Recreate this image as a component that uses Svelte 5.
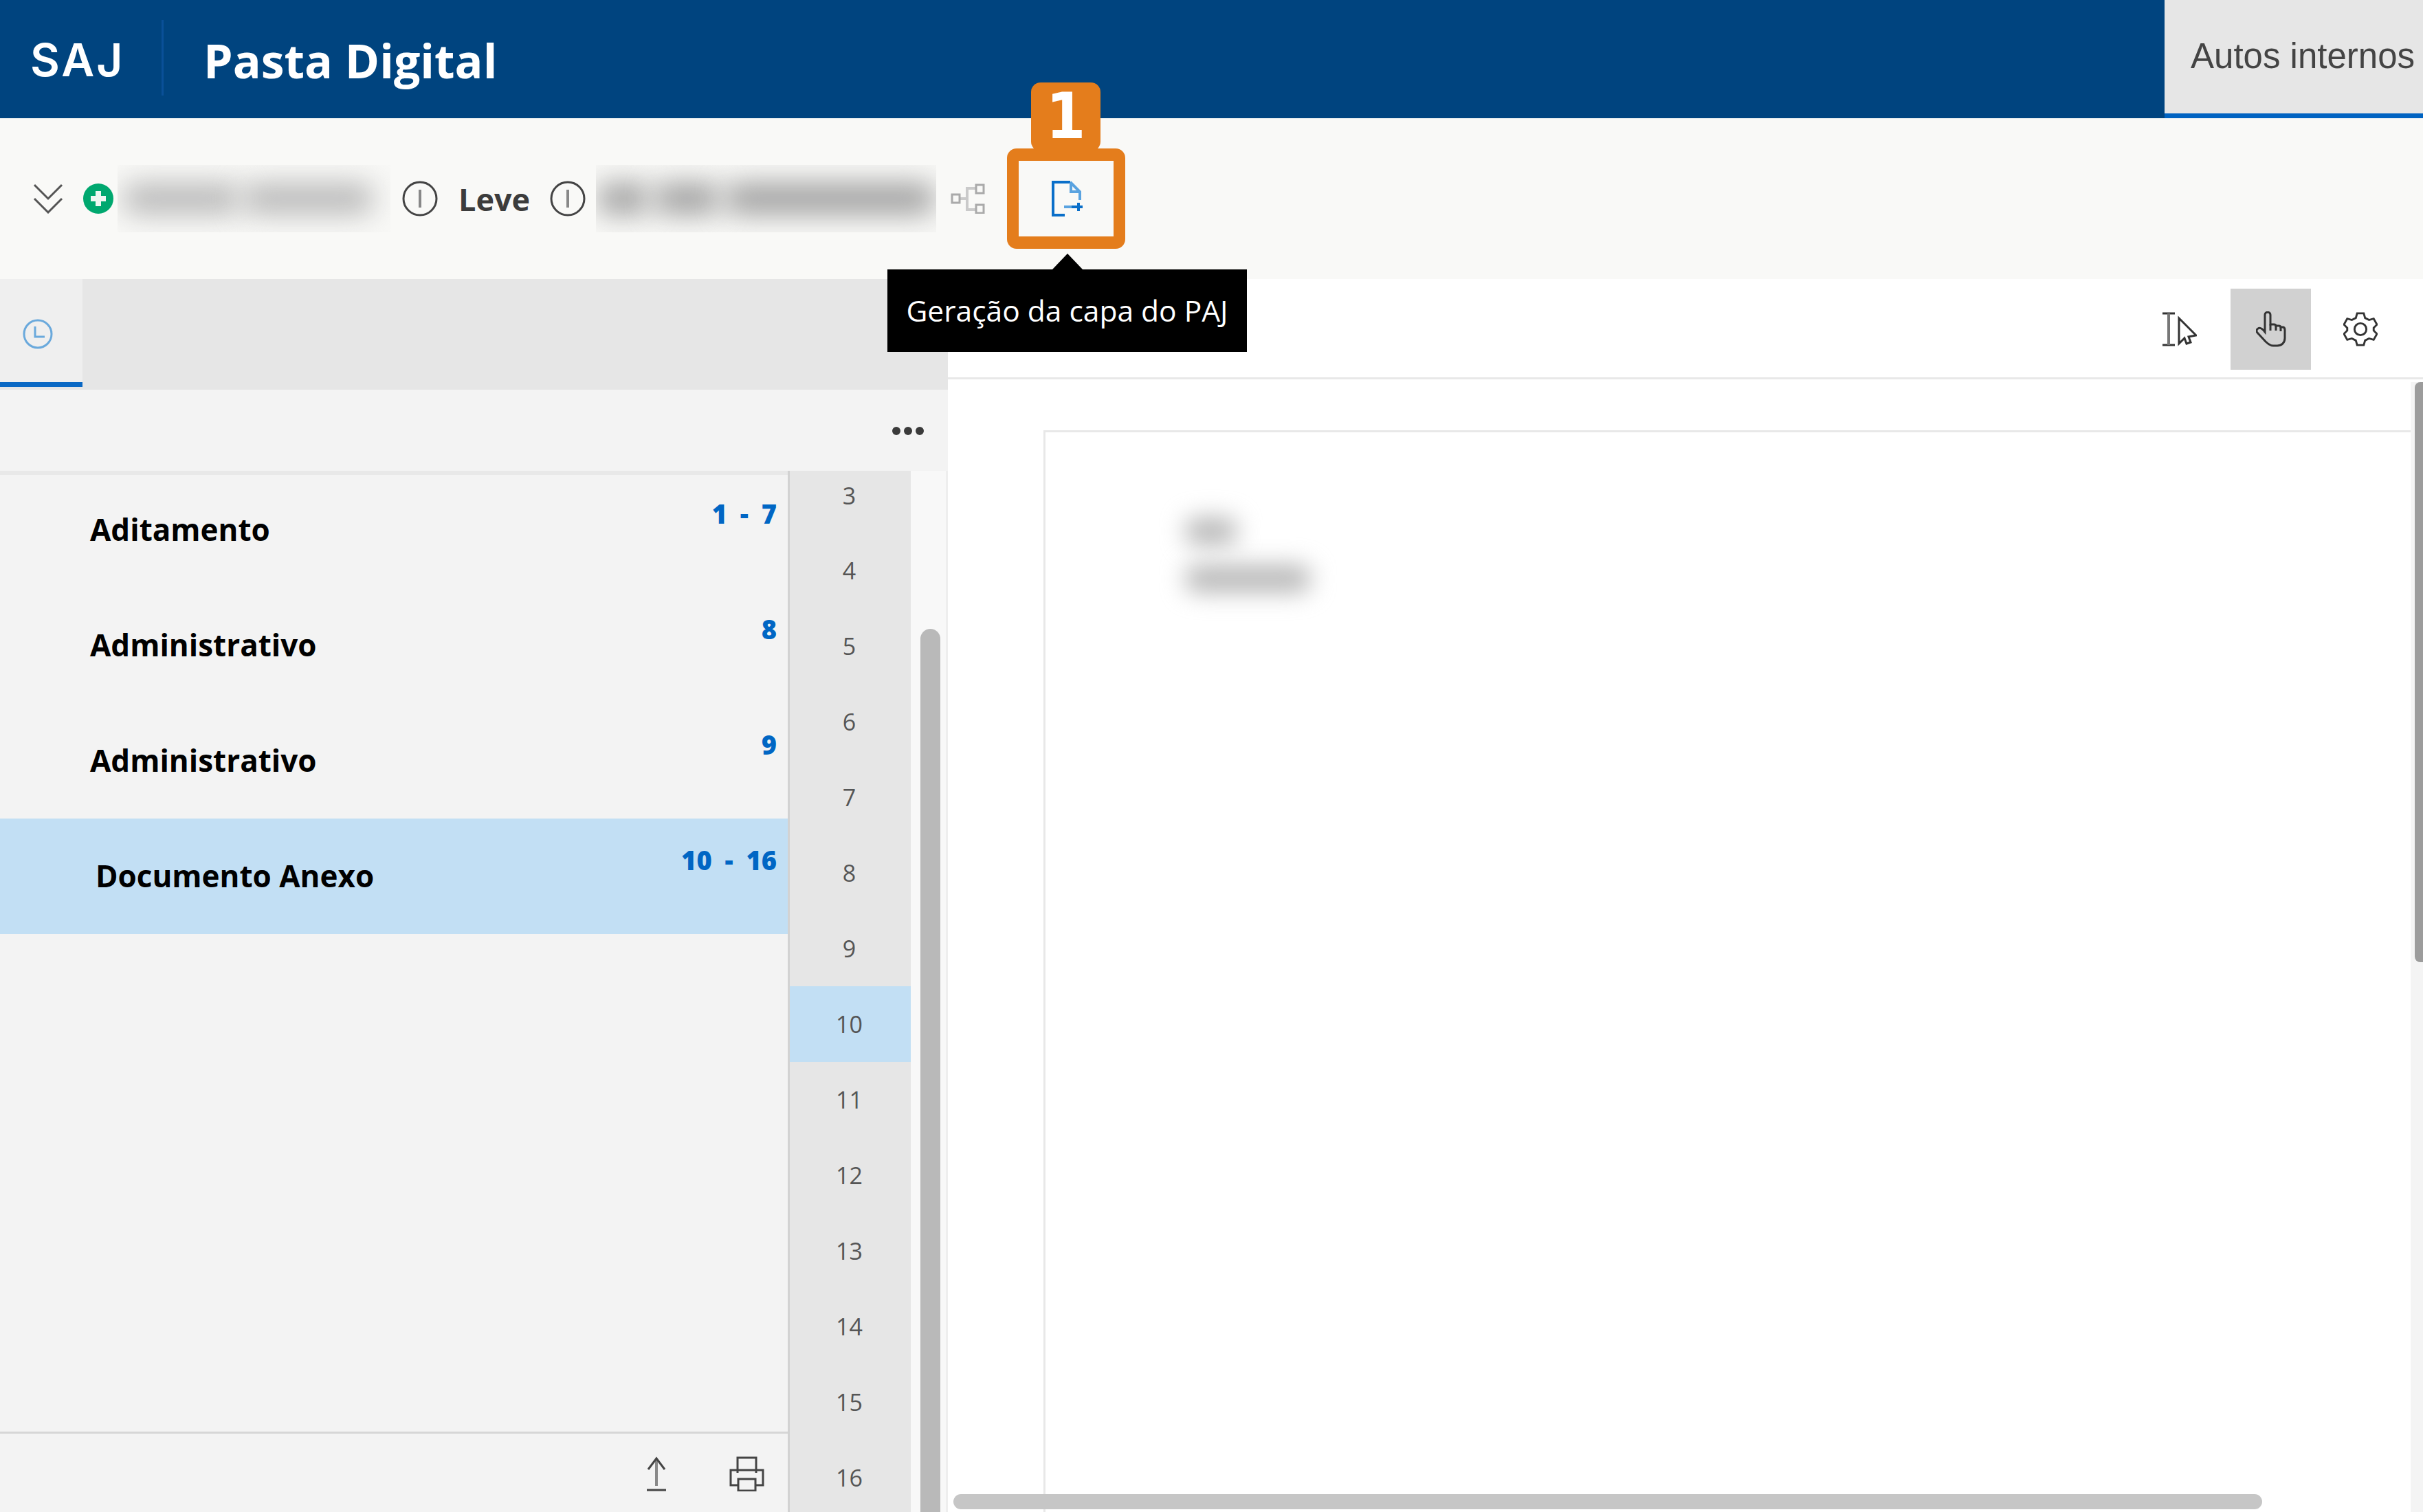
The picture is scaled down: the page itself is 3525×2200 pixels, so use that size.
<script>
  const docs = [
    { title: 'Aditamento', range: '1 - 7' },
    { title: 'Administrativo', range: '8' },
    { title: 'Administrativo', range: '9' },
    { title: 'Documento Anexo', range: '10 - 16', selected: true }
  ];
  const pages = [3, 4, 5, 6, 7, 8, 9, 10, 11, 12, 13, 14, 15, 16];
</script>

<div class="app">
  <header class="top">
    <span class="saj">SAJ</span>
    <span class="divider"></span>
    <h1>Pasta Digital</h1>
    <div class="tab-top">Autos internos</div>
  </header>

  <section class="toolbar">
    <svg class="ic chev" viewBox="0 0 44 44" fill="none" stroke="#555" stroke-width="3"><path d="M2 2l20 20L42 2M2 22l20 20L42 22"/></svg>
    <svg class="ic plus" viewBox="0 0 44 44"><circle cx="22" cy="22" r="22" fill="#00a86f"/><path d="M22 11v22M11 22h22" stroke="#f0f7f2" stroke-width="8"/></svg>
    <div class="blurbox b1"><i class="w1"></i><i class="w2"></i></div>
    <svg class="ic info i1" viewBox="0 0 52 52" fill="none" stroke="#444" stroke-width="3"><circle cx="26" cy="26" r="24"/><path d="M26 13v26" stroke="#888" stroke-width="4"/></svg>
    <strong class="leve">Leve</strong>
    <svg class="ic info i2" viewBox="0 0 52 52" fill="none" stroke="#444" stroke-width="3"><circle cx="26" cy="26" r="24"/><path d="M26 13v26" stroke="#888" stroke-width="4"/></svg>
    <div class="blurbox b2"><i class="w3"></i><i class="w4"></i><i class="w5"></i></div>
    <svg class="ic tree" viewBox="0 0 50 44" fill="none" stroke="#aaa" stroke-width="3"><path d="M13 22h11M37 7H24v31h13" stroke="#cacaca" stroke-width="4"/><rect x="2" y="16" width="11" height="12"/><rect x="37" y="2" width="11" height="12"/><rect x="37" y="31" width="11" height="12"/></svg>
    <svg class="ic doc" viewBox="0 0 46 52" fill="none" stroke="#0a6fc9" stroke-width="4"><path d="M19 50H2V2h25"/><path d="M27 2l14 14v12M28 3v13h12" stroke="#5aa3e0"/><path d="M18 38h27" stroke="#5aa3e0"/><path d="M29 38h16M39 32v12" stroke-width="4"/></svg>
  </section>

  <main class="body">
    <aside class="left">
      <div class="tabs">
        <div class="tab-clock">
          <svg viewBox="0 0 44 44" fill="none" stroke="#6aa9dc" stroke-width="3"><circle cx="22" cy="22" r="20"/><path d="M18 11v15h14"/></svg>
        </div>
      </div>
      <div class="menu-row"><span class="dots"><b></b><b></b><b></b></span></div>
      <div class="columns">
        <div class="list-col">
          <div class="list">
            {#each docs as d}
              <div class="doc-row" class:sel={d.selected}>
                <span class="title">{d.title}</span>
                <span class="range">{d.range}</span>
              </div>
            {/each}
          </div>
          <div class="foot">
            <svg class="up" viewBox="0 0 28 51" fill="none" stroke="#444" stroke-width="3"><path d="M14 3v40" stroke="#888" stroke-width="4"/><path d="M2 19L14 3l12 16"/><path d="M0 49h28"/></svg>
            <svg class="print" viewBox="0 0 51 51" fill="none" stroke="#444" stroke-width="3"><path d="M12 24V2h27v22"/><path d="M12 42H2V20h47v22H39"/><rect x="13" y="33" width="25" height="17"/></svg>
          </div>
        </div>
        <div class="nums">
          {#each pages as p}
            <div class="num" class:on={p === 10}>{p}</div>
          {/each}
        </div>
        <div class="track"><div class="thumb"></div></div>
      </div>
    </aside>

    <section class="viewer">
      <div class="vbar">
        <svg class="vic" viewBox="0 0 50 52" fill="none" stroke="#333" stroke-width="3"><path d="M0 3h18M0 49h18" stroke-width="3"/><path d="M9 3v46" stroke="#777" stroke-width="4"/><path d="M24 10L49 35l-11 2 3 8-6 2-3-8-8 8z"/></svg>
        <span class="hand">
          <svg viewBox="0 0 44 52" fill="none" stroke="#333" stroke-width="3"><path d="M13 30V5c0-5 8-5 8 0v14h5c2 0 3 1 3 2h4c2 0 3 1 3 2h3c2 0 3 2 3 4v12c0 7-5 11-11 11h-6c-5 0-8-3-11-6L2 31c-2-2-1-5 1-6 3-2 6 0 10 5z"/><path d="M21 19v9M29 21v7M36 23v6"/></svg>
        </span>
        <svg class="vic gear" viewBox="0 0 52 52" fill="none" stroke="#333" stroke-width="3"><circle cx="26" cy="26" r="9"/><path d="M21 2h10l2 7 6 3 7-2 5 9-5 5v4l5 5-5 9-7-2-6 3-2 7H21l-2-7-6-3-7 2-5-9 5-5v-4l-5-5 5-9 7 2 6-3z"/></svg>
      </div>
      <div class="canvas">
        <div class="page">
          <div class="blurred"><i class="s"></i><i class="l"></i></div>
        </div>
        <div class="vtrack"><div class="vthumb"></div></div>
        <div class="hthumb"></div>
      </div>
    </section>
  </main>

  <div class="tooltip">Geração da capa do PAJ</div>
  <div class="mark-box"></div>
  <div class="mark-num">1</div>
</div>

<style>
  :global(body) { margin: 0; background: #fff; }
  .app { position: relative; width: 3525px; height: 2200px; overflow: hidden; display: flex; flex-direction: column; font-family: "Open Sans", sans-serif; }

  .top { height: 172px; flex: none; background: #00447f; display: flex; align-items: center; color: #fff; }
  .saj { margin-left: 44px; width: 140px; font: 600 66px "Inter", sans-serif; letter-spacing: 3px; position: relative; top: 1px; white-space: nowrap; }
  .divider { margin-left: 51px; width: 3px; height: 110px; background: #0a5098; position: relative; top: -2px; }
  h1 { margin: 0 0 0 58px; font: 700 68px "Open Sans", sans-serif; position: relative; top: 1px; flex: 1; }
  .tab-top { width: 376px; height: 172px; box-sizing: border-box; background: #e6e6e6; border-bottom: 7px solid #0063c1; color: #444; font: 400 51px "Liberation Sans", sans-serif; padding: 52px 0 0 38px; white-space: nowrap; overflow: hidden; }

  .toolbar { height: 234px; flex: none; background: #f9f9f7; display: flex; align-items: center; position: relative; }
  .ic { flex: none; display: block; }
  .chev { width: 44px; height: 44px; margin-left: 48px; }
  .plus { width: 44px; height: 44px; margin-left: 29px; }
  .blurbox { height: 98px; background: #f8f8f6; overflow: hidden; display: flex; align-items: center; flex: none; }
  .blurbox i { display: block; height: 44px; filter: blur(20px); border-radius: 18px; flex: none; }
  .b1 { width: 397px; margin-left: 6px; padding-left: 8px; box-sizing: border-box; gap: 4px; }
  .b1 i { background: #b8b8b8; }
  .w1 { width: 170px; }
  .w2 { width: 190px; background: #aeaeae; }
  .info { width: 52px; height: 52px; }
  .i1 { margin-left: 17px; }
  .leve { margin-left: 30px; width: 103px; font: 700 45px "Open Sans", sans-serif; color: #3c3c3c; }
  .i2 { margin-left: 30px; }
  .b2 { width: 495px; margin-left: 15px; gap: 8px; padding-left: 2px; box-sizing: border-box; }
  .b2 i { background: #9e9e9e; }
  .w3 { width: 75px; }
  .w4 { width: 95px; }
  .w5 { width: 305px; }
  .tree { width: 50px; height: 44px; margin-left: 21px; }
  .doc { width: 46px; height: 52px; margin-left: 97px; }

  .body { flex: 1; display: flex; min-height: 0; }
  .left { width: 1379px; flex: none; display: flex; flex-direction: column; background: #f3f3f3; }
  .tabs { height: 161px; flex: none; background: #e6e6e6; }
  .tab-clock { width: 120px; height: 157px; box-sizing: border-box; background: #efefef; border-bottom: 7px solid #0a68c4; display: flex; justify-content: center; padding: 58px 10px 0 0; }
  .tab-clock svg { width: 44px; height: 44px; }
  .menu-row { height: 118px; flex: none; display: flex; justify-content: flex-end; align-items: center; padding: 2px 35px 0 0; box-sizing: border-box; }
  .dots { display: flex; gap: 5px; }
  .dots b { width: 12px; height: 12px; border-radius: 50%; background: #3a3a3a; }
  .columns { flex: 1; display: flex; min-height: 0; }
  .list-col { width: 1146px; flex: none; display: flex; flex-direction: column; }
  .list { flex: 1; border-top: 6px solid #e8e8e8; }
  .doc-row { height: 168px; position: relative; display: flex; }
  .doc-row:first-child { margin-top: -4px; }
  .doc-row.sel { background: #c2dff4; }
  .title { font: 700 44px/60px "Open Sans", sans-serif; color: #000; padding: 53px 0 0 131px; }
  .sel .title { padding-left: 139px; }
  .range { margin-left: auto; font: 800 38px/50px "Open Sans", sans-serif; color: #0066c4; padding: 35px 16px 0 0; white-space: pre; word-spacing: 9px; }
  .foot { height: 117px; flex: none; border-top: 3px solid #d6d6d6; display: flex; justify-content: flex-end; align-items: flex-start; padding: 33px 34px 0 0; box-sizing: border-box; }
  .up { width: 28px; height: 51px; }
  .print { width: 51px; height: 51px; margin-left: 92px; }
  .nums { width: 179px; flex: none; box-sizing: border-box; border-left: 3px solid #d2d2d2; background: #e6e6e6; }
  .num { height: 110px; display: flex; align-items: center; justify-content: center; font: 400 34px "Open Sans", sans-serif; color: #555; box-sizing: border-box; padding-right: 3px; }
  .num:first-child { height: 90px; padding-bottom: 18px; }
  .num.on { background: #c2dff4; }
  .track { width: 54px; flex: none; box-sizing: border-box; background: #f8f8f8; border-right: 3px solid #eee; position: relative; }
  .thumb { position: absolute; left: 14px; top: 230px; bottom: -20px; width: 29px; border-radius: 15px; background: #b9b9b9; }

  .viewer { flex: 1; display: flex; flex-direction: column; min-width: 0; }
  .vbar { height: 146px; flex: none; box-sizing: border-box; border-bottom: 3px solid #e8e8e8; display: flex; justify-content: flex-end; align-items: flex-start; padding: 14px 66px 0 0; }
  .vic { width: 50px; height: 52px; margin-top: 33px; flex: none; }
  .hand { width: 117px; height: 118px; background: #d1d1d1; display: flex; align-items: center; justify-content: center; margin-left: 49px; }
  .hand svg { width: 44px; height: 52px; }
  .gear { margin-left: 47px; }
  .canvas { flex: 1; position: relative; overflow: hidden; }
  .page { position: absolute; left: 139px; top: 74px; right: 18px; bottom: -20px; border: solid #e8e8e8; border-width: 3px 0 0 3px; }
  .blurred i { position: absolute; display: block; background: #b8b8b8; filter: blur(17px); border-radius: 18px; left: 203px; }
  .blurred .s { top: 124px; width: 76px; height: 40px; }
  .blurred .l { top: 193px; width: 183px; height: 40px; }
  .vtrack { position: absolute; right: 0; top: 4px; bottom: 0; width: 18px; background: #f4f4f4; }
  .vthumb { position: absolute; left: 6px; right: 0; top: 0; height: 844px; background: #9c9c9c; border-radius: 8px 0 0 8px; }
  .hthumb { position: absolute; left: 8px; bottom: 4px; width: 1904px; height: 22px; border-radius: 11px; background: #c6c6c6; }

  .tooltip { position: absolute; left: 1291px; top: 392px; width: 523px; height: 120px; box-sizing: border-box; background: #000; color: #fff; font: 400 42.500px/120px "Open Sans", sans-serif; text-align: center; white-space: nowrap; }
  .tooltip::before { content: ""; position: absolute; left: 240px; top: -23px; border: solid transparent; border-width: 0 22px 23px; border-bottom-color: #000; }
  .mark-box { position: absolute; left: 1465px; top: 216px; width: 172px; height: 146px; box-sizing: border-box; border: solid #e47d1c; border-width: 18px 17px; border-radius: 14px; }
  .mark-num { position: absolute; left: 1500px; top: 120px; width: 101px; height: 100px; border-radius: 14px; background: #e47d1c; color: #fff; font: 700 92px/100px "DejaVu Sans Condensed", "DejaVu Sans", sans-serif; text-align: center; }
</style>
